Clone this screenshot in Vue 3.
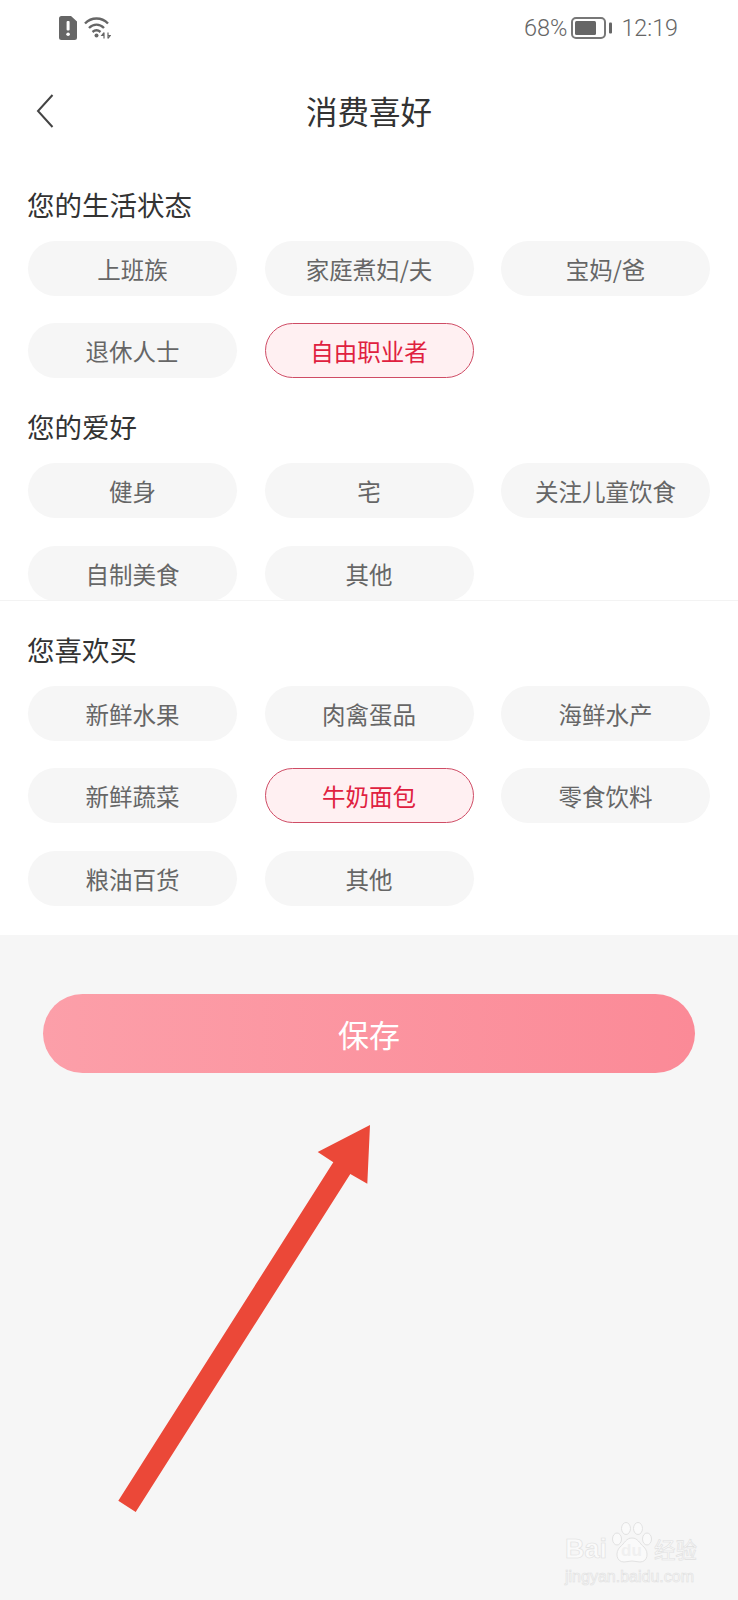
<script setup>
const groups = [
  {
    title: '您的生活状态',
    items: [
      { label: '上班族' },
      { label: '家庭煮妇/夫' },
      { label: '宝妈/爸' },
      { label: '退休人士' },
      { label: '自由职业者', active: true },
    ],
  },
  {
    title: '您的爱好',
    items: [
      { label: '健身' },
      { label: '宅' },
      { label: '关注儿童饮食' },
      { label: '自制美食' },
      { label: '其他' },
    ],
  },
  {
    title: '您喜欢买',
    items: [
      { label: '新鲜水果' },
      { label: '肉禽蛋品' },
      { label: '海鲜水产' },
      { label: '新鲜蔬菜' },
      { label: '牛奶面包', active: true },
      { label: '零食饮料' },
      { label: '粮油百货' },
      { label: '其他' },
    ],
  },
];
</script>

<template>
  <div class="page">
    <div class="status">
      <svg class="sim" width="18" height="24" viewBox="0 0 18 24">
        <path d="M2.500 0H12L18 5.500V21.500a2.500 2.500 0 0 1-2.500 2.500H2.500A2.500 2.500 0 0 1 0 21.500V2.500A2.500 2.500 0 0 1 2.500 0Z" fill="#666" />
        <rect x="7.600" y="5" width="3" height="9.500" rx="1" fill="#fff" />
        <circle cx="9.100" cy="18.300" r="1.800" fill="#fff" />
      </svg>
      <svg class="wifi" width="27" height="24" viewBox="0 0 27 24" fill="none" stroke="#666" stroke-width="2.400">
        <path d="M1 7.500C7.500 0.800 17.500 0.800 24 7.500" />
        <path d="M5 12C9.500 7.500 15.500 7.500 20 12" />
        <path d="M8.500 16C11 13.800 14 13.800 16.500 16" />
        <circle cx="12.500" cy="19.500" r="2" fill="#666" stroke="none" />
        <path d="M20 16.500V22.500M20 16.500L17.800 19.500H20M24 16.500V22.500M24 22.500L26.200 19.500H24" stroke-width="1.200" />
      </svg>
      <div class="status-right">
        <span class="percent">68%</span>
        <svg class="battery" width="41" height="22" viewBox="0 0 41 22">
          <rect x="1" y="1" width="33" height="20" rx="4" fill="none" stroke="#777" stroke-width="2" />
          <rect x="4" y="4" width="21" height="14" rx="1.500" fill="#666" />
          <rect x="38" y="5.500" width="3" height="11" rx="1" fill="#666" />
        </svg>
        <span class="time">12:19</span>
      </div>
    </div>

    <div class="nav">
      <svg class="back" width="18" height="34" viewBox="0 0 18 34" fill="none" stroke="#444" stroke-width="2">
        <path d="M16.500 1L2 17L16.500 33" />
      </svg>
      <span class="nav-title">消费喜好</span>
    </div>

    <div class="panel">
      <template v-for="group in groups" :key="group.title">
        <div class="group-title">{{ group.title }}</div>
        <div class="chips">
          <div
            v-for="item in group.items"
            :key="item.label"
            class="chip"
            :class="{ active: item.active }"
          >
            {{ item.label }}
          </div>
        </div>
        <div v-if="group.title === '您的爱好'" class="divider"></div>
      </template>
    </div>

    <div class="save">保存</div>

    <svg class="arrow" width="738" height="1600" viewBox="0 0 738 1600">
      <polygon points="370,1125 317.700,1152 333.300,1162.300 118.300,1500.700 135.700,1512 350.300,1174 367.300,1183.700" fill="#eb4838" />
    </svg>

    <div class="watermark">
      <div class="wm-top">
        <span class="wm-bai">Bai</span>
        <div class="wm-paw">
          <svg width="42" height="42" viewBox="0 0 42 42" fill="#fafafa" stroke="#e2e2e2" stroke-width="1">
            <ellipse cx="6" cy="17" rx="4.500" ry="6" />
            <ellipse cx="15" cy="6.500" rx="4.500" ry="6" />
            <ellipse cx="27" cy="6.500" rx="4.500" ry="6" />
            <ellipse cx="36" cy="17" rx="4.500" ry="6" />
            <path d="M21 16C27 16 28 21 33 25C38 30 37 40 29 40C26 40 24 39 21 39C18 39 16 40 13 40C5 40 4 30 9 25C14 21 15 16 21 16Z" />
          </svg>
          <span class="wm-du">du</span>
        </div>
        <span class="wm-cn">经验</span>
      </div>
      <div class="wm-url">jingyan.baidu.com</div>
    </div>
  </div>
</template>

<style scoped>
.page {
  position: relative;
  width: 738px;
  min-height: 1600px;
  background: #f6f6f6;
  font-family: "Noto Sans CJK SC", "Noto Sans", sans-serif;
  overflow: hidden;
}

.status {
  display: flex;
  align-items: center;
  height: 56px;
  padding: 0 60px 0 59px;
  background: #fff;
  color: #666;
}

.wifi {
  margin-left: 7px;
}

.status-right {
  display: flex;
  align-items: center;
  margin-left: auto;
  font-family: Roboto, sans-serif;
  font-weight: 300;
}

.percent {
  font-size: 23.500px;
}

.battery {
  margin-left: 4px;
}

.time {
  margin-left: 9px;
  font-size: 23.300px;
}

.nav {
  position: relative;
  display: flex;
  align-items: center;
  justify-content: center;
  box-sizing: border-box;
  height: 99.750px;
  padding-top: 8px;
  background: #fff;
}

.back {
  position: absolute;
  left: 36px;
  top: 38px;
}

.nav-title {
  font-size: 31.500px;
  line-height: 40px;
  color: #333;
}

.panel {
  padding: 0 28px 29.250px;
  background: #fff;
}

.group-title {
  margin-left: -1px;
  padding: 33px 0 22px;
  font-size: 27.500px;
  line-height: 30px;
  color: #333;
}

.chips {
  display: grid;
  grid-template-columns: repeat(3, 209px);
  column-gap: 27.500px;
  row-gap: 27.500px;
}

.chip {
  box-sizing: border-box;
  height: 55px;
  line-height: 57px;
  border-radius: 28px;
  background: #f6f6f6;
  text-align: center;
  font-size: 23.500px;
  color: #666;
}

.chip.active {
  line-height: 55px;
  border: 1px solid #cf4c65;
  background: #fff0f2;
  color: #e0213f;
}

.divider {
  position: relative;
  height: 1px;
  margin: -1px -28px 0;
  background: #f3f3f3;
}

.save {
  height: 79px;
  margin: 59.250px 43px 0;
  border-radius: 40px;
  background: linear-gradient(90deg, #fc9fa9, #fb8a97);
  text-align: center;
  font-size: 31px;
  line-height: 79px;
  color: #fff;
}

.arrow {
  position: absolute;
  left: 0;
  top: 0;
  pointer-events: none;
}

.watermark {
  position: absolute;
  left: 565px;
  top: 1520px;
  width: 140px;
  color: #fafafa;
  -webkit-text-stroke: 0.6px #e0e0e0;
}

.wm-top {
  display: flex;
  align-items: flex-end;
  height: 44px;
}

.wm-bai {
  width: 46px;
  font-family: "Liberation Sans", sans-serif;
  font-weight: 700;
  font-size: 27px;
  line-height: 30px;
}

.wm-paw {
  position: relative;
  width: 42px;
  height: 42px;
}

.wm-du {
  position: absolute;
  left: 10px;
  top: 20px;
  font-family: "Liberation Sans", sans-serif;
  font-weight: 700;
  font-size: 17px;
  line-height: 18px;
  color: #f0f0f0;
  -webkit-text-stroke: 0;
}

.wm-cn {
  margin-left: 1px;
  font-size: 21.500px;
  line-height: 30px;
}

.wm-url {
  margin-top: 4px;
  font-family: "Liberation Sans", sans-serif;
  font-size: 16px;
  line-height: 18px;
  white-space: nowrap;
}
</style>

<style>
html,
body {
  margin: 0;
  background: #f6f6f6;
}
</style>
